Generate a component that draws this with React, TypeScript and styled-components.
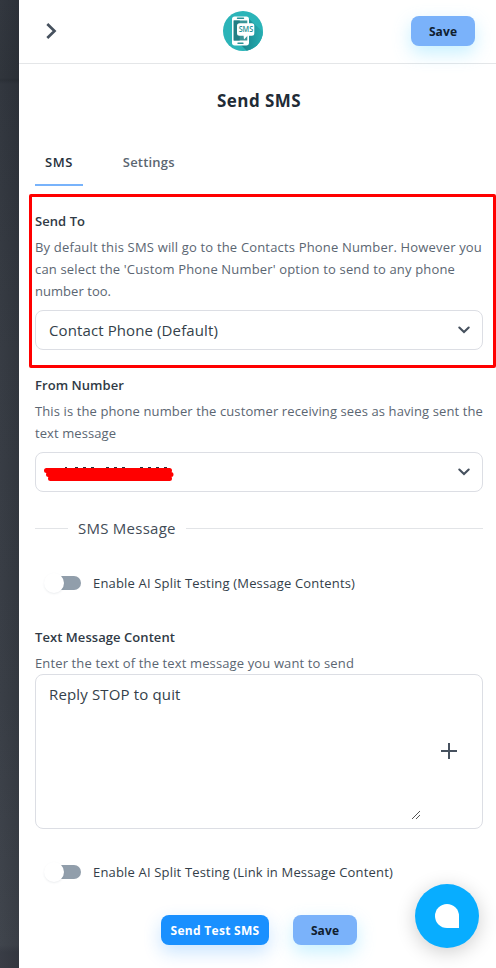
import React from "react";
import styled, { createGlobalStyle } from "styled-components";

const GlobalStyle = createGlobalStyle`
  * { box-sizing: border-box; }
  body { margin: 0; background: #fff; font-family: "Open Sans", "Noto Sans", sans-serif; }
  button { font-family: inherit; }
`;

const Page = styled.div`
  display: flex;
  height: 968px;
  overflow: hidden;
`;

const Backdrop = styled.aside`
  flex: 0 0 19px;
  background:
    linear-gradient(90deg, rgba(255, 255, 255, 0.015), rgba(0, 0, 0, 0.06)),
    linear-gradient(#2f343c 0, #2d3239 78px, #292e35 80px, #2f343c 84px, #343941 350px, #373c44 700px, #3d424a 945px, #363a43 952px, #373a43 100%);
`;

const Panel = styled.main`
  flex: 1;
  min-width: 0;
  background: #fff;
`;

const Header = styled.header`
  display: flex;
  align-items: flex-start;
  justify-content: space-between;
  height: 64px;
  padding: 11px 21px 0 26px;
  border-bottom: 1px solid #e4e6e8;
`;

const IconButton = styled.button`
  display: flex;
  padding: 0;
  border: 0;
  background: none;
`;

const CollapseButton = styled(IconButton)`
  margin-top: 10px;
  width: 40px;
`;

const LogoSlot = styled.div`
  display: flex;
  margin-left: 14px;
  margin-right: 24px;
  flex: 1;
  justify-content: center;
`;

const ActionButton = styled.button<{ $primary?: boolean; $width: number }>`
  width: ${(p) => p.$width}px;
  height: 30px;
  padding: 1px 0 0;
  border: 0;
  border-radius: 8px;
  font-size: 12px;
  font-weight: 700;
  line-height: 30px;
  white-space: nowrap;
  letter-spacing: ${(p) => (p.$primary ? "0.28px" : "0.1px")};
  color: ${(p) => (p.$primary ? "#fff" : "#10202e")};
  background: ${(p) => (p.$primary ? "#1990ff" : "#7ab2fa")};
  box-shadow: 0 7px 18px ${(p) => (p.$primary ? "rgba(25, 144, 255, 0.24)" : "rgba(120, 220, 255, 0.42)")};
`;

const HeaderAction = styled.div`
  display: flex;
  padding-top: 5px;
`;

const Title = styled.h1`
  margin: 0;
  padding-left: 3px;
  height: 73px;
  line-height: 73px;
  text-align: center;
  font-size: 17px;
  font-weight: 700;
  letter-spacing: 0.44px;
  color: #212b36;
`;

const Content = styled.div`
  padding: 0 13px 0 16px;
`;

const Tabs = styled.nav`
  display: flex;
  gap: 30px;
  height: 49px;
`;

const Tab = styled.button<{ $active?: boolean }>`
  height: 49px;
  padding: 3px 10px 0;
  border: 0;
  border-bottom: 2px solid ${(p) => (p.$active ? "#78b3fb" : "transparent")};
  background: none;
  line-height: 44px;
  font-size: 13px;
  font-weight: 600;
  letter-spacing: ${(p) => (p.$active ? 0.5 : 0.2)}px;
  color: ${(p) => (p.$active ? "#27313c" : "#5b6671")};
`;

const Field = styled.section<{ $top: number }>`
  position: relative;
  margin-top: ${(p) => p.$top}px;
`;

const Highlight = styled.div`
  position: absolute;
  inset: -12px -13px -18px -6px;
  border: 3px solid #ff0000;
  border-radius: 2px;
  pointer-events: none;
`;

const Label = styled.h2`
  margin: 0;
  font-size: 13px;
  font-weight: 600;
  line-height: 30px;
  letter-spacing: 0.06px;
  color: #303a45;
`;

const HelpLine = styled.div<{ $track: number }>`
  font-size: 13px;
  line-height: 22px;
  white-space: nowrap;
  letter-spacing: ${(p) => p.$track}px;
  color: #5b6672;
`;

const SelectBox = styled.div`
  display: flex;
  align-items: center;
  justify-content: space-between;
  height: 40px;
  margin-top: 8px;
  padding: 0 11px 0 13px;
  border: 1px solid #dcdee4;
  border-radius: 8px;
  font-size: 15px;
  letter-spacing: 0.11px;
  color: #343f4a;
`;

const Redacted = styled.div`
  display: flex;
  margin-left: -5px;
`;

const Divider = styled.div`
  display: grid;
  grid-template-columns: 33px auto 1fr;
  align-items: center;
  gap: 10px;
  height: 30px;
  margin-top: 21px;
  font-size: 15px;
  letter-spacing: 0.25px;
  color: #424c57;
`;

const Rule = styled.span`
  height: 1px;
  background: #e2e4e7;
`;

const SwitchRow = styled.div<{ $top: number }>`
  display: flex;
  align-items: center;
  height: 22px;
  margin-top: ${(p) => p.$top}px;
  padding-left: 12px;
  font-size: 13px;
  letter-spacing: 0.17px;
  white-space: nowrap;
  color: #333e49;
`;

const Track = styled.span`
  display: flex;
  align-items: center;
  width: 34px;
  height: 14px;
  margin-right: 12px;
  border-radius: 7px;
  background: #919eab;
`;

const Knob = styled.span`
  flex: 0 0 20px;
  height: 20px;
  margin-left: -3px;
  border-radius: 50%;
  background: #fff;
  box-shadow: 0 1px 2px rgba(60, 75, 95, 0.1);
`;

const MessageBox = styled.div`
  display: flex;
  height: 155px;
  border: 1px solid #dcdee4;
  border-radius: 8px;
`;

const MessageText = styled.div`
  flex: 1;
  padding: 8px 0 0 13px;
  font-size: 15px;
  line-height: 22px;
  letter-spacing: 0.15px;
  color: #343f4a;
`;

const ResizeGrip = styled.svg`
  align-self: flex-end;
  margin-bottom: 8px;
`;

const AddButton = styled(IconButton)`
  align-self: center;
  margin: 0 25px 2px 20px;
`;

const Actions = styled.footer`
  display: flex;
  justify-content: center;
  gap: 24px;
  margin-top: 32px;
`;

const ChatLauncher = styled.button`
  position: fixed;
  left: 415px;
  top: 884px;
  display: grid;
  place-items: center;
  width: 64px;
  height: 64px;
  padding: 0;
  border: 0;
  border-radius: 50%;
  background: #08adff;
  box-shadow: 0 4px 20px rgba(0, 0, 0, 0.2);
`;

const ChatBubble = styled.span`
  width: 24px;
  height: 24px;
  border-radius: 50% 50% 0 50%;
  background: #fff;
`;

const DownArrow = () => (
  <svg width="14" height="10" viewBox="0 0 14 10" fill="none">
    <path d="M2.3 2.5 7 7l4.7-4.5" stroke="#46515e" strokeWidth="2.1" strokeLinecap="round" />
  </svg>
);

const RightArrow = () => (
  <svg width="13" height="20" viewBox="0 0 13 20" fill="none">
    <path d="M2.3 3 9.5 10l-7.2 7" stroke="#46515e" strokeWidth="2.7" />
  </svg>
);

const SmsLogo = () => (
  <svg width="40" height="40" viewBox="0 0 40 40">
    <defs>
      <clipPath id="disc"><circle cx="20" cy="20" r="20" /></clipPath>
      <linearGradient id="shade" x1="0" y1="0" x2="1" y2="0">
        <stop offset="0" stopColor="#17828a" />
        <stop offset="1" stopColor="#27aeb2" />
      </linearGradient>
    </defs>
    <circle cx="20" cy="20" r="20" fill="#2bb4b8" />
    <path d="M24 6 40 21v15L24 40l-6-6z" fill="url(#shade)" clipPath="url(#disc)" />
    <rect x="9" y="5.5" width="17" height="29" rx="2.7" fill="#fff" />
    <rect x="10.7" y="9.5" width="13.6" height="20" fill="#3b9598" />
    <path d="M10.7 9.5h6v20h-6z" fill="#247f84" />
    <path d="M14.5 7.3h6M15 32.2h5" stroke="#2a9297" strokeWidth="1.4" strokeLinecap="round" />
    <path d="M16.5 12.3h12.3a2.5 2.5 0 0 1 2.5 2.5v7.5a2.5 2.5 0 0 1-2.5 2.5h-4.3l-3.5 3.7-.4-3.7h-4.1a2.5 2.5 0 0 1-2.5-2.5v-7.5a2.5 2.5 0 0 1 2.5-2.5z" fill="#fff" />
    <text x="22.9" y="21.3" textAnchor="middle" textLength="14.5" lengthAdjust="spacingAndGlyphs" fontFamily="Open Sans, sans-serif" fontSize="8" fontWeight="600" fill="#248f94">SMS</text>
  </svg>
);

const RedactedNumber = () => (
  <svg width="130" height="20" viewBox="0 0 130 20">
    <path d="M21 5.5h2M31 5.500h3m5 0h3m5 0h3M62 5.500h3m5 0h3m5 0h3M96 5.500h3m5 0h3m5 0h3m5 0h3" stroke="#26313c" strokeWidth="1" />
    <path d="M2.500 8.500H125.500M4.500 12.500h122.500M6.500 16.500h119" stroke="#ff0000" strokeWidth="5" strokeLinecap="round" />
  </svg>
);

const SwitchControl = ({ label, top }: { label: string; top: number }) => (
  <SwitchRow $top={top}>
    <Track role="switch" aria-checked={false}><Knob /></Track>
    {label}
  </SwitchRow>
);

export default function App() {
  return (
    <>
      <GlobalStyle />
      <Page>
        <Backdrop />
        <Panel>
          <Header>
            <CollapseButton aria-label="Close panel"><RightArrow /></CollapseButton>
            <LogoSlot><SmsLogo /></LogoSlot>
            <HeaderAction><ActionButton $width={64}>Save</ActionButton></HeaderAction>
          </Header>
          <Title>Send SMS</Title>
          <Content>
            <Tabs>
              <Tab $active>SMS</Tab>
              <Tab>Settings</Tab>
            </Tabs>

            <Field $top={20}>
              <Label>Send To</Label>
              <HelpLine $track={0.172}>By default this SMS will go to the Contacts Phone Number. However you</HelpLine>
              <HelpLine $track={0.16}>can select the 'Custom Phone Number' option to send to any phone</HelpLine>
              <HelpLine $track={0.04}>number too.</HelpLine>
              <SelectBox>Contact Phone (Default)<DownArrow /></SelectBox>
              <Highlight />
            </Field>

            <Field $top={20}>
              <Label>From Number</Label>
              <HelpLine $track={0.111}>This is the phone number the customer receiving sees as having sent the</HelpLine>
              <HelpLine $track={0.08}>text message</HelpLine>
              <SelectBox><Redacted><RedactedNumber /></Redacted><DownArrow /></SelectBox>
            </Field>

            <Divider><Rule />SMS Message<Rule /></Divider>
            <SwitchControl top={29} label="Enable AI Split Testing (Message Contents)" />

            <Field $top={28}>
              <Label>Text Message Content</Label>
              <HelpLine $track={0.13}>Enter the text of the text message you want to send</HelpLine>
              <MessageBox>
                <MessageText>Reply STOP to quit</MessageText>
                <ResizeGrip width="10" height="10" viewBox="0 0 10 10">
                  <path d="M1 9 9 1M5 9l4-4" stroke="#555" strokeWidth="1" />
                </ResizeGrip>
                <AddButton aria-label="Insert">
                  <svg width="16" height="16" viewBox="0 0 16 16">
                    <path d="M8 0v16M0 8h16" stroke="#46515e" strokeWidth="2" />
                  </svg>
                </AddButton>
              </MessageBox>
            </Field>

            <SwitchControl top={32} label="Enable AI Split Testing (Link in Message Content)" />
            <Actions>
              <ActionButton $primary $width={108}>Send Test SMS</ActionButton>
              <ActionButton $width={64}>Save</ActionButton>
            </Actions>
          </Content>
        </Panel>
      </Page>
      <ChatLauncher aria-label="Open chat"><ChatBubble /></ChatLauncher>
    </>
  );
}
